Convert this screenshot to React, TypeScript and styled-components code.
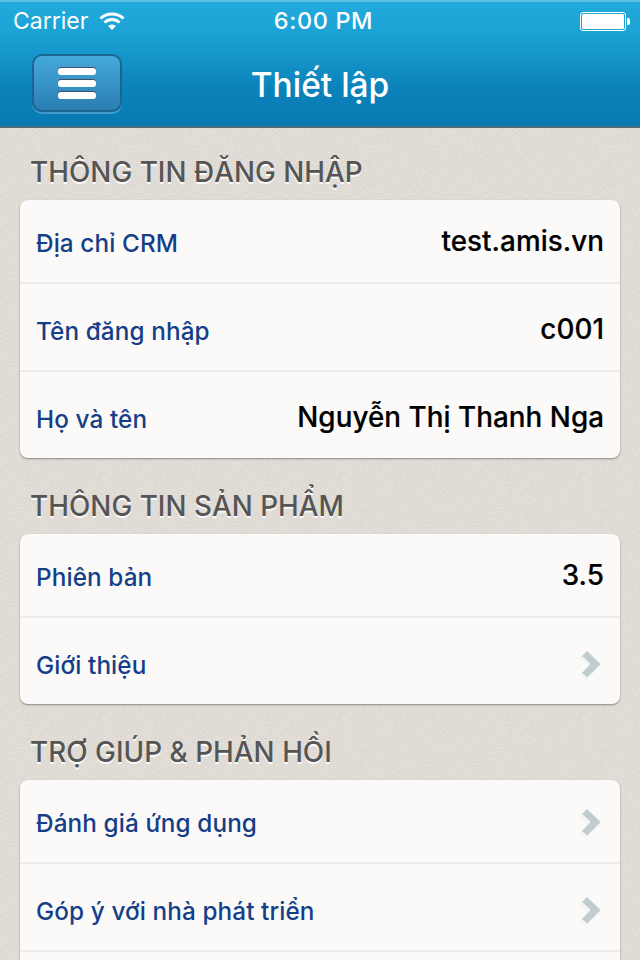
import React from "react";
import styled, { createGlobalStyle } from "styled-components";

const noise = encodeURIComponent(
  `<svg xmlns="http://www.w3.org/2000/svg" width="240" height="240"><filter id="n"><feTurbulence type="fractalNoise" baseFrequency="0.9" numOctaves="3" stitchTiles="stitch"/><feColorMatrix values="0 0 0 0 0.5 0 0 0 0 0.46 0 0 0 0 0.4 0 0 0 0.6 -0.16"/></filter><rect width="240" height="240" filter="url(#n)"/></svg>`
);

const GlobalStyle = createGlobalStyle`
  html, body {
    margin: 0;
    padding: 0;
    height: 960px;
    overflow: hidden;
    background: #e4e0da;
    font-family: Inter, "Noto Sans", "Liberation Sans", sans-serif;
  }
  * { box-sizing: border-box; }
`;

const Page = styled.div`
  width: 640px;
  height: 960px;
  overflow: hidden;
  background-color: #e6e2dc;
  background-image: url("data:image/svg+xml,${noise}");
`;

const Header = styled.header`
  height: 128px;
  background: linear-gradient(180deg, #21aadb 0%, #1ba3d5 25%, #0c82ba 70%, #077ab2 100%);
  border-top: 2px solid #5cc0e6;
  border-bottom: 2px solid #4e6a7c;
  color: #fff;
`;

const StatusBar = styled.div`
  height: 38px;
  padding: 0 12px 0 13px;
  display: grid;
  grid-template-columns: 1fr auto 1fr;
  align-items: center;
  font-size: 23px;
  line-height: 38px;
`;

const Carrier = styled.div`
  display: flex;
  align-items: center;
  gap: 11px;
  font-weight: 400;
`;

const Clock = styled.div`
  margin-left: 6px;
  font-weight: 500;
  font-size: 23.5px;
  letter-spacing: 0.6px;
`;

const Battery = styled.div`
  justify-self: end;
  display: flex;
  align-items: center;
  gap: 1px;
  margin-right: -2px;
`;

const BatteryBody = styled.div`
  width: 46px;
  height: 19px;
  border: 1px solid #fff;
  border-radius: 3px;
  padding: 1px;

  &::before {
    content: "";
    display: block;
    height: 100%;
    background: #fff;
    border-radius: 1.5px;
  }
`;

const BatteryCap = styled.div`
  width: 3px;
  height: 7px;
  background: #fff;
  border-radius: 0 2px 2px 0;
`;

const NavBar = styled.div`
  position: relative;
  height: 86px;
  display: flex;
  align-items: center;
  justify-content: center;
`;

const MenuButton = styled.button`
  position: absolute;
  left: 32px;
  top: 14px;
  width: 90px;
  height: 58px;
  padding: 0;
  border: 2px solid #1c6491;
  border-radius: 10px;
  background: linear-gradient(180deg, #46a9da 0%, #2a7eb2 100%);
  box-shadow: 0 2px 0 #3f9ccb;
  display: flex;
  flex-direction: column;
  align-items: center;
  justify-content: center;
  gap: 5px;
`;

const MenuLine = styled.span`
  display: block;
  width: 38px;
  height: 7px;
  border-radius: 3px;
  background: #fff;
  box-shadow: 0 -1px 0 #3e4f68;
`;

const Title = styled.h1`
  margin: 4px 0 0;
  font-size: 33.5px;
  font-weight: 500;
  line-height: 40px;
`;

const Content = styled.main`
  padding: 0 20px;
`;

const SectionTitle = styled.h2`
  margin: 0;
  height: 72px;
  padding: 27px 0 0 10px;
  font-size: 27.8px;
  line-height: 34px;
  font-weight: 500;
  letter-spacing: 0.05px;
  color: #555555;
  text-shadow: 0 2px 0 rgba(255, 255, 255, 0.9);
  white-space: nowrap;
`;

const Card = styled.section`
  background: #fbfaf9;
  border-radius: 8px;
  box-shadow: 0 1px 2px rgba(70, 65, 60, 0.55);
  margin-bottom: 4px;
  overflow: hidden;
`;

const Row = styled.div<{ $first?: boolean }>`
  height: ${(p) => (p.$first ? 82 : 88)}px;
  padding: ${(p) => (p.$first ? 0 : 4)}px 16px 0 16px;
  display: flex;
  align-items: center;
  justify-content: space-between;
  border-top: ${(p) => (p.$first ? "none" : "2px solid #ecebe9")};
`;

const Label = styled.span`
  padding-top: 4px;
  font-size: 24.3px;
  font-weight: 500;
  letter-spacing: 0.1px;
  color: #143f88;
`;

const Value = styled.span`
  font-size: 27.8px;
  font-weight: 500;
  letter-spacing: 0.05px;
  color: #000;
  -webkit-text-stroke: 0.2px #000;
`;

const ChevronSlot = styled.span`
  display: flex;
  margin: 4px 2px 0 0;
`;

const WifiIcon = () => (
  <svg width="26" height="20" viewBox="0 0 26 20" fill="none" stroke="#fff" strokeWidth="3">
    <path d="M1.5 7.5 C8 1.5 18 1.5 24.5 7.5" />
    <path d="M5.5 11.5 C10 7.5 16 7.5 20.5 11.5" />
    <path d="M9 15 L13 19 L17 15 C14.5 13 11.5 13 9 15 Z" fill="#fff" stroke="none" />
  </svg>
);

const chevronShape = "M7 1 L20.5 14 L7 27.5 L2 23 L10.5 14 L2 6 Z";

const Chevron = () => (
  <ChevronSlot>
    <svg width="22" height="30" viewBox="0 0 22 30">
      <path d={chevronShape} fill="#fff" stroke="#cfd8da" strokeWidth="0.6" transform="translate(-0.8 1.6)" />
      <path d={chevronShape} fill="#c1ccd0" />
    </svg>
  </ChevronSlot>
);

const App = () => (
  <Page>
    <GlobalStyle />
    <Header>
      <StatusBar>
        <Carrier>
          Carrier
          <WifiIcon />
        </Carrier>
        <Clock>6:00 PM</Clock>
        <Battery>
          <BatteryBody />
          <BatteryCap />
        </Battery>
      </StatusBar>
      <NavBar>
        <MenuButton aria-label="menu">
          <MenuLine />
          <MenuLine />
          <MenuLine />
        </MenuButton>
        <Title>Thiết lập</Title>
      </NavBar>
    </Header>
    <Content>
      <SectionTitle>THÔNG TIN ĐĂNG NHẬP</SectionTitle>
      <Card>
        <Row $first>
          <Label>Địa chỉ CRM</Label>
          <Value>test.amis.vn</Value>
        </Row>
        <Row>
          <Label>Tên đăng nhập</Label>
          <Value>c001</Value>
        </Row>
        <Row>
          <Label>Họ và tên</Label>
          <Value>Nguyễn Thị Thanh Nga</Value>
        </Row>
      </Card>
      <SectionTitle>THÔNG TIN SẢN PHẨM</SectionTitle>
      <Card>
        <Row $first>
          <Label>Phiên bản</Label>
          <Value>3.5</Value>
        </Row>
        <Row>
          <Label>Giới thiệu</Label>
          <Chevron />
        </Row>
      </Card>
      <SectionTitle>TRỢ GIÚP &amp; PHẢN HỒI</SectionTitle>
      <Card>
        <Row $first>
          <Label>Đánh giá ứng dụng</Label>
          <Chevron />
        </Row>
        <Row>
          <Label>Góp ý với nhà phát triển</Label>
          <Chevron />
        </Row>
        <Row />
      </Card>
    </Content>
  </Page>
);

export default App;
